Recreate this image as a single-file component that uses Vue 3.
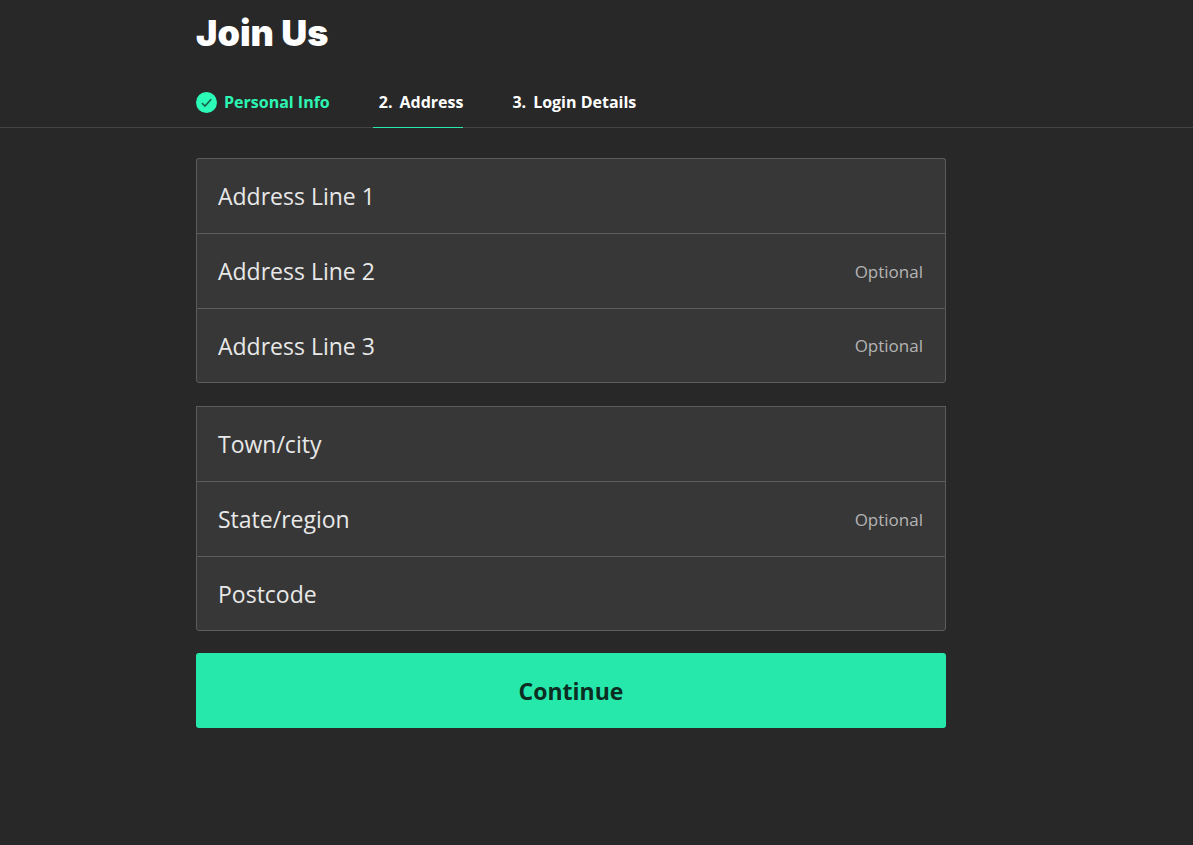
<script setup>
import { ref } from 'vue'

const groups = ref([
  [
    { id: 'line1', label: 'Address Line 1', value: '' },
    { id: 'line2', label: 'Address Line 2', value: '', optional: true },
    { id: 'line3', label: 'Address Line 3', value: '', optional: true },
  ],
  [
    { id: 'town', label: 'Town/city', value: '' },
    { id: 'state', label: 'State/region', value: '', optional: true },
    { id: 'postcode', label: 'Postcode', value: '' },
  ],
])
</script>

<template>
  <main class="page">
    <header class="header">
      <div class="container">
        <h1 class="title">Join Us</h1>
        <nav class="steps" aria-label="Registration steps">
          <a class="step done" href="#personal">
            <svg class="tick" viewBox="0 0 21 21" aria-hidden="true">
              <circle cx="10.5" cy="10.5" r="10.5" fill="#2bfcb8" />
              <path d="M6 11.2 L9 14 L15.2 7.2" fill="none" stroke="#17664c" stroke-width="1.7" />
            </svg>
            <span>Personal Info</span>
          </a>
          <a class="step current" href="#address" aria-current="step">
            <span>2.</span>
            <span>Address</span>
          </a>
          <a class="step" href="#login">
            <span>3.</span>
            <span>Login Details</span>
          </a>
        </nav>
      </div>
    </header>

    <div class="container">
      <form class="form" @submit.prevent>
        <div v-for="(fields, index) in groups" :key="index" class="group">
          <div v-for="field in fields" :key="field.id" class="field">
            <label class="label" :for="field.id">{{ field.label }}</label>
            <input :id="field.id" v-model="field.value" class="input" type="text" />
            <span v-if="field.optional" class="optional">Optional</span>
          </div>
        </div>
        <button class="submit" type="submit">Continue</button>
      </form>
    </div>
  </main>
</template>

<style>
html,
body {
  background: #282828;
}
</style>

<style scoped>
.page {
  min-height: 100vh;
  box-sizing: border-box;
  background: #282828;
  color: #fff;
  font-family: "Segoe UI", "Open Sans", "Noto Sans", sans-serif;
}

.container {
  max-width: 801px;
  margin: 0 auto;
}

.header {
  border-bottom: 1px solid #414643;
}

.title {
  margin: 0;
  padding: 9px 0 19px;
  font-family: "Segoe UI Black", Inter, sans-serif;
  font-size: 36px;
  font-weight: 900;
  line-height: 48px;
}

.steps {
  display: flex;
  gap: 43px;
  margin-bottom: -1px;
}

.step {
  display: flex;
  align-items: center;
  gap: 7px;
  height: 52px;
  box-sizing: border-box;
  padding-left: 6px;
  color: #fff;
  font-size: 16px;
  font-weight: 700;
  text-decoration: none;
}

.step.done {
  padding-left: 0;
  color: #2df5b4;
}

.step.current {
  box-shadow: inset 0 -1px #2be8ae;
}

.tick {
  width: 21px;
  height: 21px;
}

.form {
  max-width: 750px;
  padding: 30px 0 60px;
}

.group {
  margin-bottom: 23px;
}

.group:nth-child(2) {
  margin-bottom: 22px;
}

.field {
  display: flex;
  align-items: center;
  height: 75px;
  box-sizing: border-box;
  padding: 0 22px 0 21px;
  border: 1px solid #5c5c5c;
  border-bottom-width: 0;
  background: #373737;
}

.group:first-child .field:first-child {
  border-radius: 3px 3px 0 0;
}

.field:last-child {
  border-bottom-width: 1px;
  border-radius: 0 0 3px 3px;
}

.label {
  color: #e8e8e8;
  font-size: 23px;
}

.input {
  flex: 1;
  min-width: 0;
  height: 100%;
  padding: 0 12px;
  border: 0;
  outline: 0;
  background: transparent;
  color: #fff;
  font: inherit;
  font-size: 23px;
}

.optional {
  color: #b4b4b4;
  font-size: 17px;
}

.submit {
  display: block;
  width: 100%;
  height: 75px;
  border: 0;
  border-radius: 3px;
  background: #26e8ab;
  color: #0b2d22;
  font: inherit;
  font-size: 23px;
  font-weight: 700;
}
</style>
